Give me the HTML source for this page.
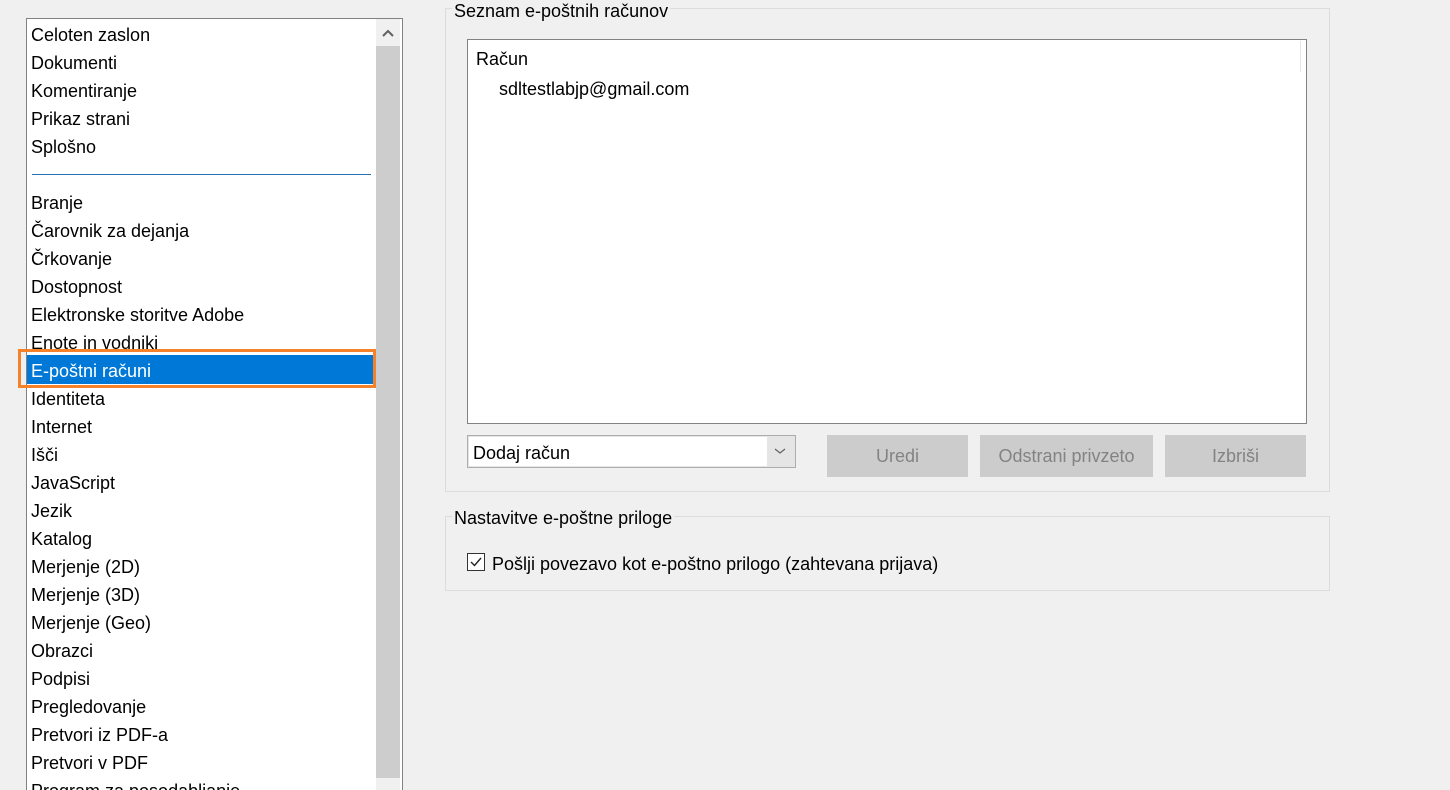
<!DOCTYPE html>
<html><head><meta charset="utf-8"><style>
*{margin:0;padding:0;box-sizing:border-box}
html,body{width:1450px;height:790px;overflow:hidden}
body{background:#f0f0f0;font-family:"Liberation Sans",sans-serif;font-size:18px;color:#000;position:relative}
.a{position:absolute}
.list{left:26px;top:18px;width:377px;height:800px;background:#fff;border:1px solid #828282}
.it{position:absolute;left:5px;white-space:nowrap;line-height:20px}
.sb{left:376px;top:19px;width:24px;height:771px;background:#f0f0f0}
.thumb{left:376px;top:46px;width:24px;height:732px;background:#cdcdcd}
.grp{border:1px solid #dcdcdc}
.lab{background:#f0f0f0;padding:0 2px;line-height:20px;white-space:nowrap;color:#000}
.btn{background:#cccccc;border:1px solid #cccccc;color:#838383;text-align:center;line-height:40px}
</style></head><body>
<div class="a list"></div>
<div class="a sb"></div>
<div class="a thumb"></div>
<svg class="a" style="left:381px;top:27px" width="14" height="12"><path d="M2 9 L7 4 L12 9" stroke="#606060" stroke-width="2" fill="none"/></svg>
<div class="a" style="left:32px;top:174px;width:339px;height:1px;background:#2a6fb3"></div>
<div class="a" style="left:18px;top:349px;width:358px;height:39px;border:3px solid #f5822a"></div>
<div class="a" style="left:27px;top:355px;width:346px;height:29px;background:#0078d7"></div>
<div class="a" style="left:26px;top:1px">
<div class="it" style="top:24px">Celoten zaslon</div>
<div class="it" style="top:52px">Dokumenti</div>
<div class="it" style="top:80px">Komentiranje</div>
<div class="it" style="top:108px">Prikaz strani</div>
<div class="it" style="top:136px">Splošno</div>
<div class="it" style="top:192px">Branje</div>
<div class="it" style="top:220px">Čarovnik za dejanja</div>
<div class="it" style="top:248px">Črkovanje</div>
<div class="it" style="top:276px">Dostopnost</div>
<div class="it" style="top:304px">Elektronske storitve Adobe</div>
<div class="it" style="top:332px">Enote in vodniki</div>
<div class="it" style="top:360px;color:#fff">E-poštni računi</div>
<div class="it" style="top:388px">Identiteta</div>
<div class="it" style="top:416px">Internet</div>
<div class="it" style="top:444px">Išči</div>
<div class="it" style="top:472px">JavaScript</div>
<div class="it" style="top:500px">Jezik</div>
<div class="it" style="top:528px">Katalog</div>
<div class="it" style="top:556px">Merjenje (2D)</div>
<div class="it" style="top:584px">Merjenje (3D)</div>
<div class="it" style="top:612px">Merjenje (Geo)</div>
<div class="it" style="top:640px">Obrazci</div>
<div class="it" style="top:668px">Podpisi</div>
<div class="it" style="top:696px">Pregledovanje</div>
<div class="it" style="top:724px">Pretvori iz PDF-a</div>
<div class="it" style="top:752px">Pretvori v PDF</div>
<div class="it" style="top:780px">Program za posodabljanje</div>
</div>

<div class="a grp" style="left:445px;top:8px;width:885px;height:484px"></div>
<div class="a lab" style="left:452px;top:1px">Seznam e-poštnih računov</div>
<div class="a" style="left:467px;top:39px;width:840px;height:385px;background:#fff;border:1px solid #828282"></div>
<div class="a" style="left:1300px;top:41px;width:1px;height:31px;background:#e5e5e5"></div>
<div class="a" style="left:476px;top:49px;line-height:20px">Račun</div>
<div class="a" style="left:499px;top:79px;line-height:20px">sdltestlabjp@gmail.com</div>
<div class="a" style="left:467px;top:435px;width:329px;height:33px;background:#e5e5e5;border:1px solid #adadad"></div>
<div class="a" style="left:469px;top:437px;width:298px;height:29px;background:#fff"></div>
<div class="a" style="left:473px;top:443px;line-height:20px">Dodaj račun</div>
<svg class="a" style="left:774px;top:446px" width="12" height="10"><path d="M1 3 L6 7 L11 3" stroke="#606060" stroke-width="1.2" fill="none"/></svg>
<div class="a btn" style="left:827px;top:435px;width:141px;height:42px">Uredi</div>
<div class="a btn" style="left:980px;top:435px;width:173px;height:42px">Odstrani privzeto</div>
<div class="a btn" style="left:1165px;top:435px;width:141px;height:42px">Izbriši</div>

<div class="a grp" style="left:445px;top:516px;width:885px;height:75px"></div>
<div class="a lab" style="left:452px;top:508px">Nastavitve e-poštne priloge</div>
<div class="a" style="left:467px;top:553px;width:18px;height:18px;background:#fff;border:1px solid #333"></div>
<svg class="a" style="left:468px;top:554px" width="16" height="16"><path d="M3 8 L6.5 11.5 L13 4" stroke="#222" stroke-width="1.4" fill="none"/></svg>
<div class="a" style="left:492px;top:554px;line-height:20px;white-space:nowrap">Pošlji povezavo kot e-poštno prilogo (zahtevana prijava)</div>
</body></html>
